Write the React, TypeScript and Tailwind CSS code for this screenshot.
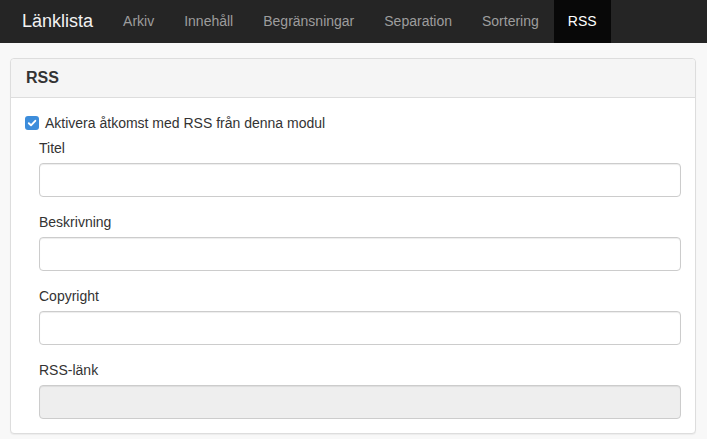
const tabs = ["Arkiv", "Innehåll", "Begränsningar", "Separation", "Sortering", "RSS"];
const active = "RSS";

const fields = [
  { label: "Titel" },
  { label: "Beskrivning" },
  { label: "Copyright" },
  { label: "RSS-länk", disabled: true },
];

function CheckMark() {
  return (
    <span className="flex items-center justify-center w-[14px] h-[14px] rounded-[3px] bg-[#3d8ddb] shrink-0">
      <svg width="10" height="10" viewBox="0 0 10 10" fill="none">
        <path d="M1.8 5.2 L4 7.3 L8.3 2.8" stroke="#fff" strokeWidth="1.9" strokeLinecap="round" strokeLinejoin="round" />
      </svg>
    </span>
  );
}

export default function App() {
  return (
    <div className="w-[707px] h-[439px] bg-[#f8f8f8] text-[14px] text-[#333] font-['Liberation_Sans',Arial,sans-serif] overflow-hidden">
      <nav className="h-[43px] bg-[#252525] flex items-stretch pl-[7px]">
        <div className="px-[15px] flex items-center text-[18px] text-[#f2f2f2]">Länklista</div>
        <ul className="flex items-stretch">
          {tabs.map((tab) => (
            <li
              key={tab}
              className={
                tab === active
                  ? "px-[14px] flex items-center bg-[#080808] text-white"
                  : "px-[15px] flex items-center text-[#9d9d9d]"
              }
            >
              {tab}
            </li>
          ))}
        </ul>
      </nav>

      <div className="mt-[15px] ml-[10px] mr-[11px] bg-white border border-[#ddd] rounded-[4px] shadow-[0_1px_1px_rgba(0,0,0,0.05)]">
        <div className="h-[39px] px-[15px] flex items-center bg-[#f5f5f5] border-b border-[#ddd] rounded-t-[4px]">
          <h3 className="text-[16px] font-bold text-[#333]">RSS</h3>
        </div>
        <div className="pt-[15px] pb-[14px] pl-[14px] pr-[14px]">
          <label className="flex items-center gap-[6px] h-[20px] leading-[20px]">
            <CheckMark />
            <span>Aktivera åtkomst med RSS från denna modul</span>
          </label>
          <div className="pl-[14px] mt-[5px]">
            {fields.map((f, i) => (
              <div key={f.label} className={i < fields.length - 1 ? "mb-[15px]" : ""}>
                <div className="leading-[20px] mb-[5px]">{f.label}</div>
                <div
                  className={
                    "h-[34px] border border-[#ccc] rounded-[4px] shadow-[inset_0_1px_1px_rgba(0,0,0,0.075)] " +
                    (f.disabled ? "bg-[#eee]" : "bg-white")
                  }
                />
              </div>
            ))}
          </div>
        </div>
      </div>
    </div>
  );
}
